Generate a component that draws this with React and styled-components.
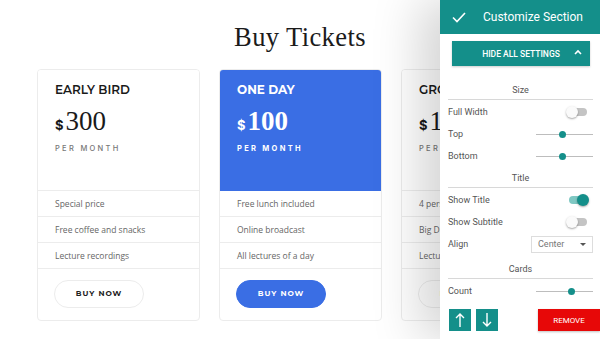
import React from "react";
import styled, { createGlobalStyle } from "styled-components";

const teal = "#148f8a";
const blue = "#3a6ee4";

const GlobalStyle = createGlobalStyle`
  html, body {
    margin: 0;
    padding: 0;
    background: #ffffff;
  }
  body {
    font-family: "Open Sans", sans-serif;
  }
`

const Page = styled.div`
  position: relative;
  width: 600px;
  height: 339px;
  overflow: hidden;
  background: #ffffff;
`

const Section = styled.section`
  padding-top: 20px;
`

const Heading = styled.h1`
  margin: 0;
  text-align: center;
  font-family: "Liberation Serif", serif;
  font-weight: 400;
  font-size: 26.5px;
  line-height: 34px;
  color: #1b1b1b;
  letter-spacing: 0.4px;
`

const CardRow = styled.div`
  display: flex;
  gap: 19px;
  width: 440px;
  box-sizing: border-box;
  overflow: hidden;
  padding-left: 37px;
  margin-top: 15px;
`

const Card = styled.div`
  flex: 0 0 163px;
  height: 252px;
  box-sizing: border-box;
  border: 1px solid #ececec;
  border-radius: 4px;
  background: #fff;
  display: flex;
  flex-direction: column;
  overflow: hidden;
`

const CardHead = styled.div`
  height: 121px;
  box-sizing: border-box;
  padding: 12px 17px 0;
  background: ${({ featured }) => (featured ? blue : "#fff")};
  color: ${({ featured }) => (featured ? "#fff" : "#1a1a1a")};
  border-bottom: 1px solid ${({ featured }) => (featured ? blue : "#ececec")};
`

const PlanName = styled.div`
  font-family: "Montserrat", "Inter", sans-serif;
  font-weight: ${({ featured }) => (featured ? 700 : 600)};
  font-size: 12px;
  line-height: 16px;
  white-space: nowrap;
`

const Price = styled.div`
  margin-top: 9px;
  display: flex;
  align-items: baseline;
  font-family: "Liberation Serif", serif;
  font-weight: ${({ featured }) => (featured ? 700 : 400)};
  font-size: 27px;
  line-height: 28px;
`

const Currency = styled.span`
  font-family: "Inter", sans-serif;
  font-size: 13px;
  font-weight: 700;
  margin-right: 2px;
`

const Period = styled.div`
  margin-top: 5px;
  font-family: "Inter", sans-serif;
  font-size: 7.5px;
  font-weight: ${({ featured }) => (featured ? 700 : 500)};
  letter-spacing: 2.3px;
  white-space: nowrap;
  color: ${({ featured }) => (featured ? "#fff" : "#777")};
`

const Feature = styled.div`
  height: 26px;
  box-sizing: border-box;
  border-bottom: 1px solid #ececec;
  padding-left: 17px;
  display: flex;
  align-items: center;
  font-family: "Open Sans", sans-serif;
  font-size: 8.5px;
  color: #666;
  white-space: nowrap;
`

const CardFoot = styled.div`
  flex: 1;
  padding: 10px 0 0 16px;
`

const BuyButton = styled.button`
  width: 90px;
  height: 28px;
  border-radius: 14px;
  border: 1px solid ${({ featured }) => (featured ? blue : "#ececec")};
  background: ${({ featured }) => (featured ? blue : "#fff")};
  color: ${({ featured }) => (featured ? "#fff" : "#222")};
  font-family: "Montserrat", "Inter", sans-serif;
  font-weight: 700;
  font-size: 7.5px;
  letter-spacing: 1px;
  cursor: pointer;
`

const Panel = styled.aside`
  position: absolute;
  top: 0;
  right: 0;
  width: 160px;
  height: 339px;
  background: #fff;
  box-shadow: -20px 0 45px rgba(0, 0, 0, 0.17);
  font-family: "Roboto", "Noto Sans", sans-serif;
  color: #555;
  font-size: 9px;
`

const PanelHeader = styled.div`
  height: 34px;
  background: ${teal};
  display: flex;
  align-items: center;
  padding-left: 12px;
  color: #fff;
  font-size: 12px;
`

const HeaderTitle = styled.span`
  margin-left: 17px;
`

const PanelBody = styled.div`
  padding: 7px 7px 0 8px;
`

const ToggleAll = styled.button`
  width: 138px;
  height: 25px;
  margin-left: 4px;
  border: none;
  background: ${teal};
  color: #fff;
  font-family: "Roboto", sans-serif;
  font-size: 8.5px;
  font-weight: 500;
  display: flex;
  align-items: center;
  justify-content: center;
  position: relative;
  box-shadow: 0 1px 2px rgba(0, 0, 0, 0.2);
`

const Chevron = styled.svg`
  position: absolute;
  right: 8px;
  top: 8px;
`

const GroupTitle = styled.div`
  text-align: center;
  margin-top: ${({ gap }) => gap}px;
  margin-bottom: 1px;
  padding-bottom: 2px;
  border-bottom: 1px solid #d8d8d8;
  line-height: 13px;
  font-size: 9px;
  color: #555;
`

const Row = styled.div`
  height: 22px;
  display: flex;
  align-items: center;
  justify-content: space-between;
`

const Switch = styled.div`
  position: relative;
  width: 18px;
  height: 8px;
  border-radius: 4px;
  margin-right: 6px;
  background: ${({ on }) => (on ? "#7fc8c3" : "#c4c4c4")};
  &::after {
    content: "";
    position: absolute;
    top: -2px;
    left: ${({ on }) => (on ? "8px" : "-3px")};
    width: 12px;
    height: 12px;
    border-radius: 50%;
    background: ${({ on }) => (on ? teal : "#fafafa")};
    box-shadow: 0 1px 2px rgba(0, 0, 0, 0.35);
  }
`

const Slider = styled.div`
  position: relative;
  width: 57px;
  height: 1px;
  background: #bdbdbd;
`

const Thumb = styled.div`
  position: absolute;
  top: -3px;
  width: 7px;
  height: 7px;
  border-radius: 50%;
  background: ${teal};
`

const Select = styled.div`
  width: 62px;
  height: 17px;
  box-sizing: border-box;
  border: 1px solid #ddd;
  display: flex;
  align-items: center;
  justify-content: space-between;
  padding: 0 6px 0 6px;
  color: #777;
`

const Caret = styled.span`
  width: 0;
  height: 0;
  border-left: 3px solid transparent;
  border-right: 3px solid transparent;
  border-top: 3px solid #555;
`

const Actions = styled.div`
  display: flex;
  align-items: center;
  margin-top: 7px;
  margin-left: 1px;
  gap: 5px;
`

const ArrowButton = styled.button`
  width: 22px;
  height: 22px;
  padding: 0;
  border: none;
  background: ${teal};
  display: flex;
  align-items: center;
  justify-content: center;
`

const RemoveButton = styled.button`
  margin-left: auto;
  margin-right: -7px;
  width: 62px;
  height: 22px;
  border: none;
  background: #e70808;
  color: #fff;
  font-family: "Roboto", sans-serif;
  font-size: 8px;
  box-shadow: 0 1px 2px rgba(0, 0, 0, 0.25);
`

const plans = [
  {
    name: "EARLY BIRD",
    price: "300",
    features: ["Special price", "Free coffee and snacks", "Lecture recordings"],
  },
  {
    name: "ONE DAY",
    price: "100",
    featured: true,
    features: ["Free lunch included", "Online broadcast", "All lectures of a day"],
  },
  {
    name: "GROUP",
    price: "1000",
    features: ["4 persons", "Big Discount", "Lecture recordings"],
  },
];

function Arrow({ down }) {
  return (
    <svg width="10" height="16" viewBox="0 0 10 16" fill="none" stroke="#fff" strokeWidth="1.4">
      {down ? (
        <path d="M5 1v13M1 10l4 4 4-4" />
      ) : (
        <path d="M5 15V2M1 6l4-4 4 4" />
      )}
    </svg>
  );
}

export default function App() {
  return (
    <Page>
      <GlobalStyle />
      <Section>
        <Heading>Buy Tickets</Heading>
        <CardRow>
          {plans.map((plan) => (
            <Card key={plan.name}>
              <CardHead featured={plan.featured}>
                <PlanName featured={plan.featured}>{plan.name}</PlanName>
                <Price featured={plan.featured}>
                  <Currency>$</Currency>
                  {plan.price}
                </Price>
                <Period featured={plan.featured}>PER MONTH</Period>
              </CardHead>
              {plan.features.map((f) => (
                <Feature key={f}>{f}</Feature>
              ))}
              <CardFoot>
                <BuyButton featured={plan.featured}>BUY NOW</BuyButton>
              </CardFoot>
            </Card>
          ))}
        </CardRow>
      </Section>

      <Panel>
        <PanelHeader>
          <svg width="14" height="11" viewBox="0 0 14 11" fill="none" stroke="#fff" strokeWidth="1.6">
            <path d="M1 5.5l4 4L13 1" />
          </svg>
          <HeaderTitle>Customize Section</HeaderTitle>
        </PanelHeader>
        <PanelBody>
          <ToggleAll>
            HIDE ALL SETTINGS
            <Chevron width="8" height="6" viewBox="0 0 8 6" fill="none" stroke="#fff" strokeWidth="1.6">
              <path d="M1 5l3-3 3 3" />
            </Chevron>
          </ToggleAll>

          <GroupTitle gap={18}>Size</GroupTitle>
          <Row>
            Full Width
            <Switch />
          </Row>
          <Row>
            Top
            <Slider>
              <Thumb style={{ left: "23px" }} />
            </Slider>
          </Row>
          <Row>
            Bottom
            <Slider>
              <Thumb style={{ left: "23px" }} />
            </Slider>
          </Row>

          <GroupTitle gap={5}>Title</GroupTitle>
          <Row>
            Show Title
            <Switch on />
          </Row>
          <Row>
            Show Subtitle
            <Switch />
          </Row>
          <Row>
            Align
            <Select>
              Center
              <Caret />
            </Select>
          </Row>

          <GroupTitle gap={8}>Cards</GroupTitle>
          <Row>
            Count
            <Slider>
              <Thumb style={{ left: "32px" }} />
            </Slider>
          </Row>

          <Actions>
            <ArrowButton>
              <Arrow />
            </ArrowButton>
            <ArrowButton>
              <Arrow down />
            </ArrowButton>
            <RemoveButton>REMOVE</RemoveButton>
          </Actions>
        </PanelBody>
      </Panel>
    </Page>
  );
}
